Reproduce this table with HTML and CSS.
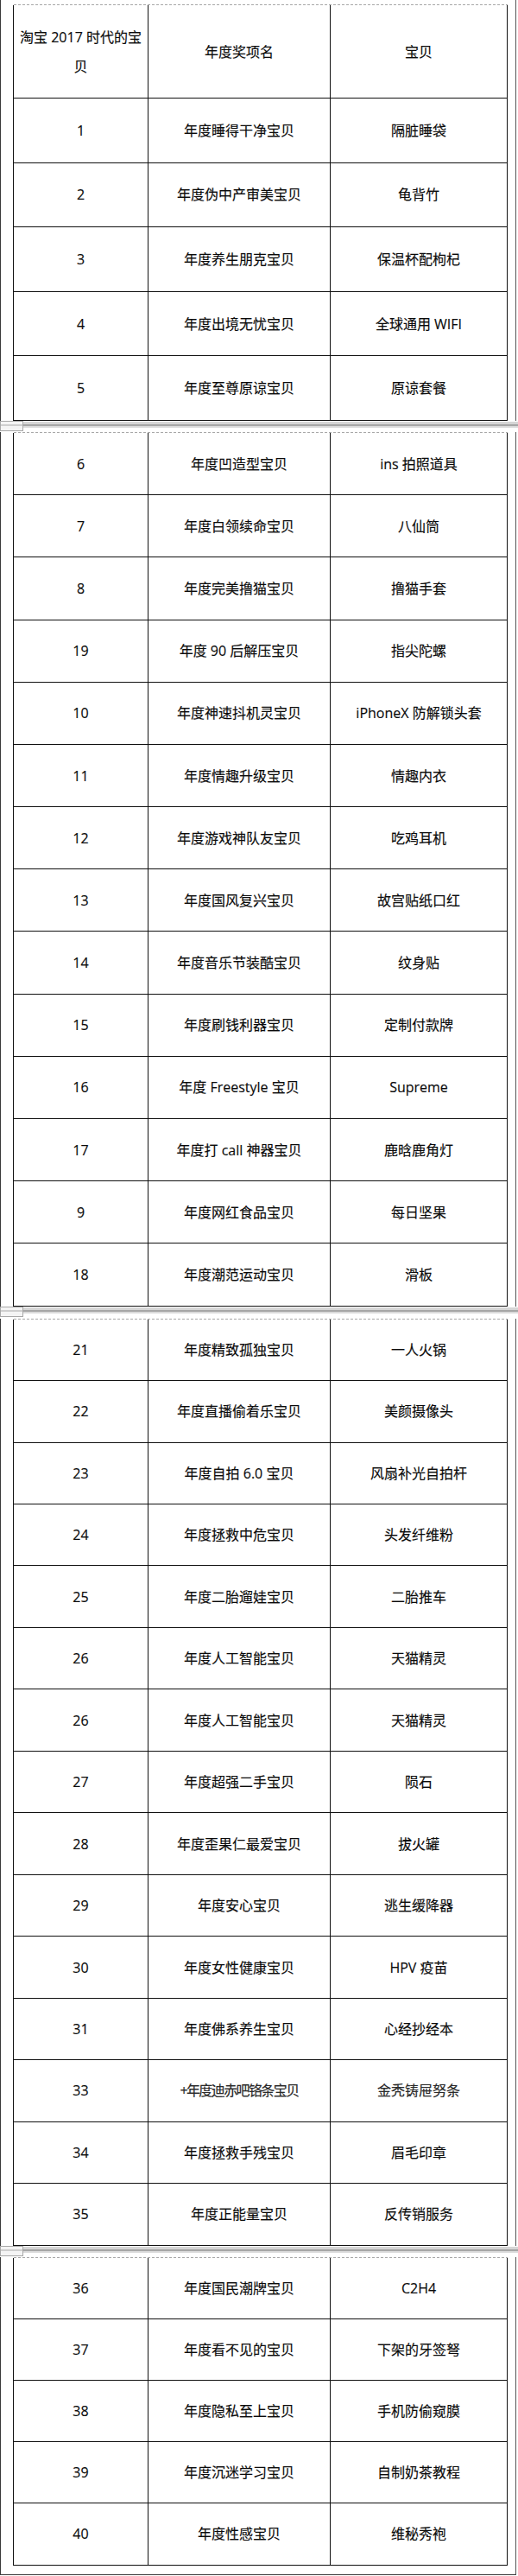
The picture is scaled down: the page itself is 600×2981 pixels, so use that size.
FILE: index.html
```html
<!DOCTYPE html>
<html lang="zh-CN">
<head>
<meta charset="utf-8">
<title>淘宝2017时代的宝贝</title>
<link rel="stylesheet" href="styles.css">
</head>
<body>
<div class="doc">
  <section class="page p1">
    <div class="dash"></div>
    <div class="grid">
      <div class="c hd">淘宝 2017 时代的宝<br>贝</div>
      <div class="c hd">年度奖项名</div>
      <div class="c hd">宝贝</div>
      <div class="c">1</div><div class="c">年度睡得干净宝贝</div><div class="c">隔脏睡袋</div>
      <div class="c">2</div><div class="c">年度伪中产审美宝贝</div><div class="c">龟背竹</div>
      <div class="c">3</div><div class="c">年度养生朋克宝贝</div><div class="c">保温杯配枸杞</div>
      <div class="c">4</div><div class="c">年度出境无忧宝贝</div><div class="c">全球通用 WIFI</div>
      <div class="c">5</div><div class="c">年度至尊原谅宝贝</div><div class="c">原谅套餐</div>
    </div>
  </section>
  <div class="brk b13"><span class="handle"></span></div>
  <section class="page p2">
    <div class="dash"></div>
    <div class="grid">
      <div class="c">6</div><div class="c">年度凹造型宝贝</div><div class="c">ins 拍照道具</div>
      <div class="c">7</div><div class="c">年度白领续命宝贝</div><div class="c">八仙筒</div>
      <div class="c">8</div><div class="c">年度完美撸猫宝贝</div><div class="c">撸猫手套</div>
      <div class="c">19</div><div class="c">年度 90 后解压宝贝</div><div class="c">指尖陀螺</div>
      <div class="c">10</div><div class="c">年度神速抖机灵宝贝</div><div class="c">iPhoneX 防解锁头套</div>
      <div class="c">11</div><div class="c">年度情趣升级宝贝</div><div class="c">情趣内衣</div>
      <div class="c">12</div><div class="c">年度游戏神队友宝贝</div><div class="c">吃鸡耳机</div>
      <div class="c">13</div><div class="c">年度国风复兴宝贝</div><div class="c">故宫贴纸口红</div>
      <div class="c">14</div><div class="c">年度音乐节装酷宝贝</div><div class="c">纹身贴</div>
      <div class="c">15</div><div class="c">年度刷钱利器宝贝</div><div class="c">定制付款牌</div>
      <div class="c">16</div><div class="c">年度 Freestyle 宝贝</div><div class="c">Supreme</div>
      <div class="c">17</div><div class="c">年度打 call 神器宝贝</div><div class="c">鹿晗鹿角灯</div>
      <div class="c">9</div><div class="c">年度网红食品宝贝</div><div class="c">每日坚果</div>
      <div class="c">18</div><div class="c">年度潮范运动宝贝</div><div class="c">滑板</div>
    </div>
  </section>
  <div class="brk b14"><span class="handle"></span></div>
  <section class="page p3">
    <div class="dash"></div>
    <div class="grid">
      <div class="c">21</div><div class="c">年度精致孤独宝贝</div><div class="c">一人火锅</div>
      <div class="c">22</div><div class="c">年度直播偷着乐宝贝</div><div class="c">美颜摄像头</div>
      <div class="c">23</div><div class="c">年度自拍 6.0 宝贝</div><div class="c">风扇补光自拍杆</div>
      <div class="c">24</div><div class="c">年度拯救中危宝贝</div><div class="c">头发纤维粉</div>
      <div class="c">25</div><div class="c">年度二胎遛娃宝贝</div><div class="c">二胎推车</div>
      <div class="c">26</div><div class="c">年度人工智能宝贝</div><div class="c">天猫精灵</div>
      <div class="c">26</div><div class="c">年度人工智能宝贝</div><div class="c">天猫精灵</div>
      <div class="c">27</div><div class="c">年度超强二手宝贝</div><div class="c">陨石</div>
      <div class="c">28</div><div class="c">年度歪果仁最爱宝贝</div><div class="c">拔火罐</div>
      <div class="c">29</div><div class="c">年度安心宝贝</div><div class="c">逃生缓降器</div>
      <div class="c">30</div><div class="c">年度女性健康宝贝</div><div class="c">HPV 疫苗</div>
      <div class="c">31</div><div class="c">年度佛系养生宝贝</div><div class="c">心经抄经本</div>
      <div class="c">33</div><div class="c"><span class="garble">+年度迪赤吧铬条宝贝</span></div><div class="c"><span class="garble2">金秃铸屉努条</span></div>
      <div class="c">34</div><div class="c">年度拯救手残宝贝</div><div class="c">眉毛印章</div>
      <div class="c">35</div><div class="c">年度正能量宝贝</div><div class="c">反传销服务</div>
    </div>
  </section>
  <div class="brk b13"><span class="handle"></span></div>
  <section class="page p4">
    <div class="dash"></div>
    <div class="grid">
      <div class="c">36</div><div class="c">年度国民潮牌宝贝</div><div class="c">C2H4</div>
      <div class="c">37</div><div class="c">年度看不见的宝贝</div><div class="c">下架的牙签弩</div>
      <div class="c">38</div><div class="c">年度隐私至上宝贝</div><div class="c">手机防偷窥膜</div>
      <div class="c">39</div><div class="c">年度沉迷学习宝贝</div><div class="c">自制奶茶教程</div>
      <div class="c">40</div><div class="c">年度性感宝贝</div><div class="c">维秘秀袍</div>
    </div>
  </section>
</div>
</body>
</html>
```

FILE: styles.css
```css
* { box-sizing: border-box; }
html, body { margin: 0; padding: 0; background: #fff; }
body {
  font-family: "Open Sans", "Noto Sans CJK SC", sans-serif;
  font-size: 16px;
  color: #0a0a0a;
}
.doc { width: 600px; }

.page {
  width: 598px;
  padding-left: 14px;
  border-left: 1px solid #3a3a3a;
  border-right: 1px solid #555;
}
.p1 { padding-top: 5px; }
.p4 { padding-bottom: 10px; border-bottom: 1px solid #3a3a3a; }

.dash {
  margin-left: 1px;
  width: 572px;
  height: 1px;
  background: repeating-linear-gradient(to right, #a8a8a8 0 3px, transparent 3px 5px);
}

.grid {
  display: grid;
  grid-template-columns: 156px 211px 205px;
  width: 573px;
  border-left: 1px solid #111;
}
.p1 .grid { grid-template-rows: 108px; grid-auto-rows: 74.6px; }
.p2 .grid { grid-auto-rows: 72.2px; }
.p3 .grid { grid-auto-rows: 71.47px; }
.p4 .grid { grid-auto-rows: 71.2px; }

.c {
  display: flex;
  align-items: center;
  justify-content: center;
  text-align: center;
  border-right: 1px solid #111;
  border-bottom: 1px solid #111;
  line-height: 22px;
  white-space: nowrap;
  -webkit-text-stroke: 0.15px #0a0a0a;
}
.hd { line-height: 34px; }

.garble { letter-spacing: -1.6px; color: #2a2a2a; }
.garble2 { color: #2a2a2a; }

.brk {
  display: flex;
  align-items: flex-start;
  width: 600px;
  background: linear-gradient(to bottom,
    #fff 0 1px,
    #d6d6d6 1px 4px,
    #a6a6a6 4px 6px,
    #dadada 6px 8px,
    #fff 8px);
}
.b13 { height: 13px; }
.b14 { height: 14px; }
.handle {
  display: block;
  width: 27px;
  height: 12px;
  border: 1px solid #a8a8a8;
  background: linear-gradient(to bottom,
    #f4f4f4 0 3px,
    #cfcfcf 3px 5px,
    #f4f4f4 5px);
}
```
